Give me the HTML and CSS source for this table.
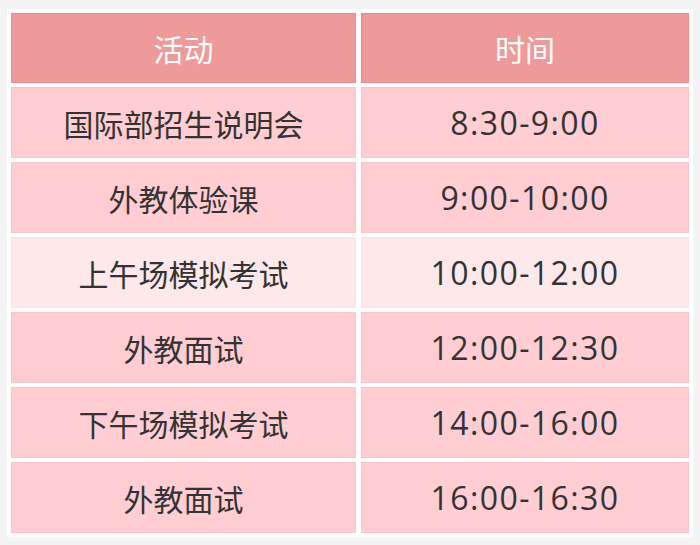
FILE: index.html
```html
<!DOCTYPE html>
<html lang="zh">
<head>
<meta charset="utf-8">
<link rel="stylesheet" href="styles.css">
</head>
<body>
<div class="sheet">
  <div class="grid">
    <div class="cell head">活动</div>
    <div class="cell head">时间</div>
    <div class="cell">国际部招生说明会</div>
    <div class="cell num">8:30-9:00</div>
    <div class="cell">外教体验课</div>
    <div class="cell num">9:00-10:00</div>
    <div class="cell light">上午场模拟考试</div>
    <div class="cell light num">10:00-12:00</div>
    <div class="cell">外教面试</div>
    <div class="cell num">12:00-12:30</div>
    <div class="cell">下午场模拟考试</div>
    <div class="cell num">14:00-16:00</div>
    <div class="cell">外教面试</div>
    <div class="cell num">16:00-16:30</div>
  </div>
</div>
</body>
</html>
```
FILE: styles.css
```css
html, body {
  margin: 0;
  padding: 0;
  background: #f4f4f4;
}
body {
  padding: 9px 7px 0 7px;
  font-family: "Noto Sans CJK SC", "Noto Sans", sans-serif;
}
.sheet {
  background: #ffffff;
  width: 686px;
  padding: 4px;
  box-sizing: border-box;
}
.grid {
  display: grid;
  grid-template-columns: 345px 328px;
  grid-template-rows: 70px repeat(6, 71px);
  column-gap: 5px;
  row-gap: 4px;
}
.cell {
  display: flex;
  align-items: center;
  justify-content: center;
  background: #ffcdd2;
  border: 1px solid #fcc4c9;
  color: #333333;
  font-size: 30px;
  font-weight: 400;
  box-sizing: border-box;
}
.head {
  background: #ef9a9a;
  border-color: #ec8c8c;
  color: #ffffff;
}
.light {
  background: #ffe8ea;
  border-color: #fde0e2;
}
.num {
  font-family: "Open Sans", "Noto Sans CJK SC", sans-serif;
  font-size: 32px;
  letter-spacing: 1.4px;
}
```
